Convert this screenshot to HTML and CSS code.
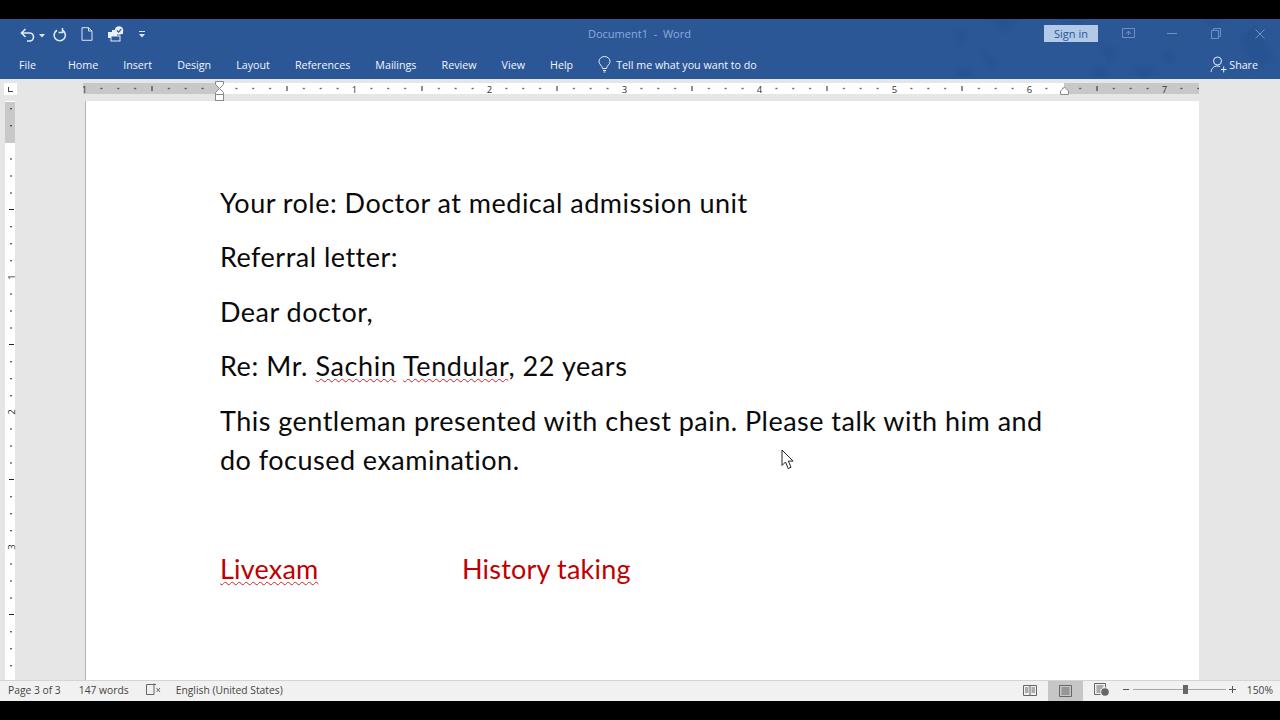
FILE: index.html
```html
<!DOCTYPE html>
<html lang="en">
<head>
<meta charset="utf-8">
<title>Document1 - Word</title>
<link rel="stylesheet" href="styles.css">
</head>
<body>
<div class="app">
  <div class="letterbox-top"></div>
  <header class="ribbon">
    <svg class="texture" width="340" height="60" viewBox="0 0 340 60" aria-hidden="true">
      <g fill="#1f4a88">
        <path d="M15 8l12 6-6 14z"/><circle cx="24" cy="57" r="9"/><path d="M50 0h30l-14 14z"/><path d="M40 30l10 20 8-8z"/>
        <path d="M120 0h22l-6 16zM160 25l18 6-8 16z"/><circle cx="160" cy="55" r="8"/>
        <path d="M190 48h26l-12 14zM220 30l18 6-10 10z"/><path d="M262 0h22l-8 10z"/><path d="M300 20l14 30 20-10-20-34z"/>
      </g>
    </svg>
    <div class="title-row">
      <div class="qat">
        <svg class="qi" width="15" height="15" viewBox="0 0 15 15"><path d="M5.500 2L1.500 6l4 4M2 6h7.500a4 4 0 0 1 0 8H7" fill="none" stroke="#e4edf9" stroke-width="1.600"/></svg>
        <svg class="caret" width="6" height="4" viewBox="0 0 6 4"><path d="M0 0h6L3 3.500z" fill="#dbe6f5"/></svg>
        <svg class="qi redo" width="14" height="15" viewBox="0 0 14 15"><path d="M4 3.200a5.600 5.600 0 1 0 5.500 0M9.500 1v4.500h-4" fill="none" stroke="#dbe6f5" stroke-width="1.600"/></svg>
        <svg class="qi newdoc" width="12" height="14" viewBox="0 0 12 14"><path d="M1 .7h6.500L11 4v9.300H1zM7.500.7V4H11" fill="#2b579a" stroke="#dbe6f5"/></svg>
        <svg class="qi printer" width="17" height="16" viewBox="0 0 17 16"><path d="M0 6h4v-2h5v8H0z" fill="#e8eff9"/><rect x="3" y="10" width="9" height="5" fill="#2b579a" stroke="#e8eff9"/><path d="M9 8h6V5h-5z" fill="#e8eff9"/><circle cx="11" cy="4.500" r="4.300" fill="#e8eff9"/><path d="M9 4.500l1.600 1.600 2.600-3" fill="none" stroke="#2b579a" stroke-width="1.300"/></svg>
        <svg class="more" width="6" height="7" viewBox="0 0 6 7"><path d="M0 0h6v1H0zM0 3h6L3 6.500z" fill="#dbe6f5"/></svg>
      </div>
      <div class="doc-title">Document1&nbsp; -&nbsp; Word</div>
      <div class="win">
        <div class="signin">Sign in</div>
        <svg class="win-a" width="13" height="10" viewBox="0 0 13 10"><path d="M.5.500h12v9H.5zM4 6l2.500-3L9 6M6.500 3v4" fill="none" stroke="#6f90c3"/></svg>
        <svg class="win-b" width="10" height="2" viewBox="0 0 10 2"><path d="M0 .500h10" stroke="#6f90c3"/></svg>
        <svg class="win-c" width="10" height="11" viewBox="0 0 10 11"><path d="M.5 2.500h7v8h-7zM2.500 2.500v-2h7v8h-2" fill="none" stroke="#6f90c3"/></svg>
        <svg class="win-d" width="10" height="10" viewBox="0 0 10 10"><path d="M.5.500l9 9M9.500.500l-9 9" stroke="#6f90c3"/></svg>
      </div>
    </div>
    <nav class="tabs">
      <span class="tab file">File</span>
      <span class="tab">Home</span>
      <span class="tab">Insert</span>
      <span class="tab">Design</span>
      <span class="tab">Layout</span>
      <span class="tab">References</span>
      <span class="tab">Mailings</span>
      <span class="tab">Review</span>
      <span class="tab">View</span>
      <span class="tab">Help</span>
      <span class="tell">
        <svg width="13" height="17" viewBox="0 0 13 17"><path d="M4.500 12.500C4.300 9.500 1 8.500 1 5.500a5.500 5 0 0 1 11 0c0 3-3.300 4-3.500 7zM5 14.500h3M5.500 16h2" fill="none" stroke="#e4edf9"/></svg>
        Tell me what you want to do
      </span>
      <span class="share">
        <svg width="17" height="17" viewBox="0 0 17 17"><circle cx="7.500" cy="5" r="4" fill="none" stroke="#e4edf9"/><path d="M1 16c.5-3.500 2.500-6 6.500-6 1 0 2 .2 2.500.6M11 13.500h5.500M13.700 10.500v6" fill="none" stroke="#e4edf9"/></svg>
        Share
      </span>
    </nav>
  </header>

  <div class="ruler-row">
    <div class="tab-stop"><span class="tab-l"></span></div>
    <svg class="h-ruler" width="1116" height="22" viewBox="0 0 1116 22">
      <defs>
        <pattern id="hticks" x="1.500" y="4" width="135" height="11" patternUnits="userSpaceOnUse">
          <g fill="#222">
            <rect x="16.200" y="4.800" width="1.400" height="1.400"/><rect x="33" y="4.800" width="1.400" height="1.400"/><rect x="49.900" y="4.800" width="1.400" height="1.400"/>
            <rect x="67" y="3" width="1" height="5"/>
            <rect x="83.700" y="4.800" width="1.400" height="1.400"/><rect x="100.500" y="4.800" width="1.400" height="1.400"/><rect x="117.400" y="4.800" width="1.400" height="1.400"/>
          </g>
        </pattern>
      </defs>
      <rect y="4" width="1116" height="11" fill="#fff"/>
      <rect y="4" width="136" height="11" fill="#c8c8c8"/>
      <rect x="981" y="4" width="135" height="11" fill="#c8c8c8"/>
      <rect y="4" width="1116" height="11" fill="url(#hticks)"/>
      <g class="rnum">
        <text x="1.500" y="13.500">1</text><text x="271.500" y="13.500">1</text><text x="406.500" y="13.500">2</text><text x="541.500" y="13.500">3</text><text x="676.500" y="13.500">4</text><text x="811.500" y="13.500">5</text><text x="946.500" y="13.500">6</text><text x="1081.500" y="13.500">7</text>
      </g>
      <path d="M132.500 2.500h8v3l-4 4 4 4v2h-8v-2l4-4-4-4z" fill="#fff" stroke="#8a8a8a"/>
      <rect x="132.500" y="15.500" width="8" height="6" fill="#fff" stroke="#8a8a8a"/>
      <path d="M977.500 15.500v-3.500l4-4 4 4v3.500z" fill="#fff" stroke="#8a8a8a"/>
    </svg>
  </div>

  <main class="workspace">
    <aside class="side">
      <svg class="v-ruler" width="10" height="579" viewBox="0 0 10 579">
        <defs>
          <pattern id="vticks" x="0" y="41" width="10" height="135" patternUnits="userSpaceOnUse">
            <g fill="#222">
              <rect x="5.300" y="16.300" width="1.400" height="1.400"/><rect x="5.300" y="33.300" width="1.400" height="1.400"/><rect x="5.300" y="50.300" width="1.400" height="1.400"/>
              <rect x="4" y="67" width="5" height="1"/>
              <rect x="5.300" y="84" width="1.400" height="1.400"/><rect x="5.300" y="101" width="1.400" height="1.400"/><rect x="5.300" y="118" width="1.400" height="1.400"/>
            </g>
          </pattern>
        </defs>
        <rect width="10" height="579" fill="#fff"/>
        <rect y="1" width="10" height="41" fill="#c8c8c8"/>
        <rect width="10" height="579" fill="url(#vticks)"/>
        <g class="rnum">
          <text transform="translate(9.500 176) rotate(-90)">1</text><text transform="translate(9.500 311) rotate(-90)">2</text><text transform="translate(9.500 446) rotate(-90)">3</text>
        </g>
      </svg>
    </aside>
    <article class="page">
      <p>Your role: Doctor at medical admission unit</p>
      <p>Referral letter:</p>
      <p>Dear doctor,</p>
      <p class="re">Re: Mr. <span class="sq">Sachin</span> <span class="sq">Tendular</span>, 22 years</p>
      <p>This gentleman presented with chest pain. Please talk with him and do focused examination.</p>
      <p>&nbsp;</p>
      <p class="red"><span class="tabbed"><span class="sq">Livexam</span></span>History taking</p>
    </article>
  </main>

  <footer class="status">
    <span class="st page-no">Page 3 of 3</span>
    <span class="st words">147 words</span>
    <svg class="proof" width="15" height="13" viewBox="0 0 15 13"><path d="M8 1.500H.5v10H8V.5M8 1.500h2" fill="none" stroke="#666"/><path d="M10.500 5l3.500 4M14 5l-3.500 4" stroke="#666"/></svg>
    <span class="st lang">English (United States)</span>
    <div class="views">
      <svg class="read" width="14" height="12" viewBox="0 0 14 12"><path d="M.5 1.500h13v10H.5zM7 1.500v10M2 4h3.500M2 6h3.500M2 8h3.500M8.500 4H12M8.500 6H12M8.500 8H12" fill="none" stroke="#666"/></svg>
      <div class="layout-btn"><svg width="13" height="12" viewBox="0 0 13 12"><path d="M.5.500h12v11H.5zM2.500 3h8M2.500 5h8M2.500 7h8M2.500 9h8" fill="none" stroke="#666"/></svg></div>
      <svg class="web" width="15" height="13" viewBox="0 0 15 13"><path d="M.5.500h11v4M.5.500v11h6M2.500 3h7M2.500 5h6M2.500 7h4M2.500 9h4" fill="none" stroke="#666"/><circle cx="11" cy="9" r="3.800" fill="#666"/></svg>
      <span class="zminus"></span>
      <div class="slider"><span class="thumb"></span></div>
      <span class="zplus"></span>
      <span class="st zoom">150%</span>
    </div>
  </footer>
  <div class="letterbox-bottom"></div>
</div>
<svg class="cursor" width="13" height="21" viewBox="0 0 13 21"><path d="M1 1v15.500l3.500-3.500 2.700 6.500 2.800-1.200-2.700-6.200h4.800z" fill="#fff" stroke="#222"/></svg>
</body>
</html>
```
FILE: styles.css
```css
* { box-sizing: border-box; }
html, body { margin: 0; padding: 0; }
body { width: 1280px; height: 720px; overflow: hidden; background: #000; position: relative; font-family: "Open Sans", "Noto Sans", sans-serif; }
.app { display: flex; flex-direction: column; height: 720px; }
.letterbox-top { height: 19px; background: #000; flex: none; }
.letterbox-bottom { height: 19px; background: #000; flex: none; }

.ribbon { height: 60px; flex: none; background: #2b5797; position: relative; overflow: hidden; }
.texture { position: absolute; right: 0; top: 0; opacity: .3; filter: blur(2px); }
.title-row { height: 29px; display: flex; align-items: center; position: relative; }
.qat { width: 560px; flex: none; display: flex; align-items: center; padding-left: 20px; padding-top: 1px; }
.caret { margin-left: 4px; margin-top: 3px; }
.redo { margin-left: 8px; }
.newdoc { margin-left: 14px; }
.printer { margin-left: 15px; margin-top: -1px; }
.more { margin-left: 14px; }
.doc-title { width: 158px; flex: none; padding-left: 28px; font-size: 11px; color: #8eaad6; white-space: nowrap; }
.win { flex: 1; display: flex; align-items: center; padding-left: 326px; }
.signin { width: 54px; height: 17px; background: #b3c9e8; color: #2b5797; font-size: 11px; line-height: 17px; text-align: center; }
.win-a { margin-left: 24px; margin-top: -2px; }
.win-b { margin-left: 32px; }
.win-c { margin-left: 34px; }
.win-d { margin-left: 34px; }

.tabs { height: 31px; display: flex; align-items: center; padding-left: 19px; padding-top: 2px; font-size: 10.700px; color: #f2f6fc; position: relative; }
.tab { margin-right: 25.100px; white-space: nowrap; }
.file { margin-right: 32px; }
.tell { display: flex; align-items: center; gap: 5px; white-space: nowrap; }
.share { margin-left: auto; margin-right: 22px; display: flex; align-items: center; gap: 2px; }

.ruler-row { height: 22px; flex: none; display: flex; background: #e6e6e6; }
.tab-stop { width: 13px; height: 12px; margin: 4px 0 0 4px; background: #fff; display: flex; align-items: center; justify-content: center; flex: none; }
.tab-l { width: 5px; height: 5px; border-left: 1px solid #444; border-bottom: 1px solid #444; }
.h-ruler { margin-left: 66px; flex: none; display: block; }
.rnum { font-family: "Open Sans", sans-serif; font-size: 9.500px; fill: #333; text-anchor: middle; }

.workspace { height: 579px; flex: none; display: flex; background: #e6e6e6; overflow: hidden; }
.side { width: 86px; flex: none; padding-left: 5px; }
.v-ruler { display: block; overflow: visible; }
.page { width: 1113px; flex: none; background: #fff; box-shadow: -1px 0 0 #b4b4b4; padding: 82px 150px 0 134px; font-family: Lato, "Liberation Sans", sans-serif; font-size: 27px; color: #0a0a0a; letter-spacing: .48px; font-variant-ligatures: none; }
.page p { margin: 0 0 15.200px; line-height: 39.300px; }
.page .re { letter-spacing: .58px; }
.sq { text-decoration: underline wavy #c0272d 1px; text-underline-offset: 2px; text-decoration-skip-ink: none; }
.red { color: #c00000; white-space: nowrap; letter-spacing: .22px; }
.page .red { letter-spacing: .2px; }
.tabbed { display: inline-block; width: 242px; }

.status { height: 21px; flex: none; background: #f1f1f1; border-top: 1px solid #d4d4d4; display: flex; align-items: center; position: relative; padding-bottom: 3px; }
.st { font-size: 10.300px; color: #444; white-space: nowrap; }
.page-no { margin-left: 8px; }
.words { margin-left: 18px; }
.proof { margin-left: 17px; }
.lang { margin-left: 15px; }
.views { margin-left: auto; display: flex; align-items: center; height: 100%; }
.read { margin-right: -1px; }
.layout-btn { width: 35px; height: 20px; margin-bottom: -3px; background: #c6c6c6; display: flex; align-items: center; justify-content: center; margin-left: 12px; padding-bottom: 1px; }
.web { margin-left: 11px; margin-right: -1px; }
.zminus { width: 6px; height: 1px; background: #555; margin-left: 15px; }
.slider { width: 93px; height: 1px; background: #a6a6a6; margin-left: 4px; position: relative; }
.thumb { position: absolute; left: 50px; top: -4px; width: 5px; height: 9px; background: #666; }
.zplus { width: 7px; height: 7px; margin-left: 3px; background: linear-gradient(#555, #555) center / 7px 1px no-repeat, linear-gradient(#555, #555) center / 1px 7px no-repeat; }
.zoom { margin-left: 11px; margin-right: 7px; }

.cursor { position: absolute; left: 781px; top: 449px; }
```
